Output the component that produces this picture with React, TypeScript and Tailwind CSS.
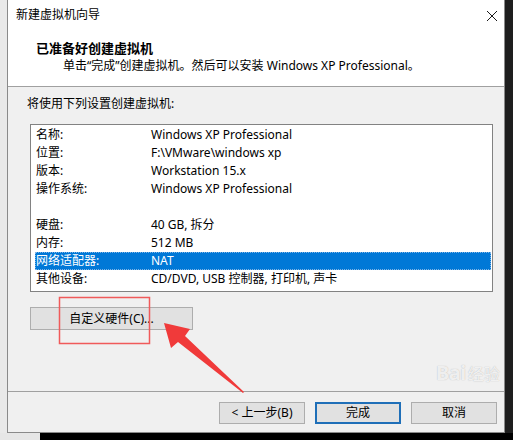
import React from 'react'

const rows: [string, string][] = [
  ['名称:', 'Windows XP Professional'],
  ['位置:', 'F:\\VMware\\windows xp'],
  ['版本:', 'Workstation 15.x'],
  ['操作系统:', 'Windows XP Professional'],
  ['', ''],
  ['硬盘:', '40 GB, 拆分'],
  ['内存:', '512 MB'],
  ['网络适配器:', 'NAT'],
  ['其他设备:', 'CD/DVD, USB 控制器, 打印机, 声卡'],
]

export default function App() {
  return (
    <div
      className="w-[513px] h-[440px] overflow-hidden flex flex-col text-[12px] text-black"
      style={{ fontFamily: '"Noto Sans", "Noto Sans CJK SC", sans-serif' }}
    >
      <div className="flex h-[433px]">
        {/* desktop strip on the left */}
        <div className="w-[7px] bg-[#e9e9e9]" />

        {/* dialog window */}
        <div className="relative w-[498px] flex flex-col border-l border-b border-r border-[#8a8a8a] bg-[#f0f0f0]">
          {/* title + header */}
          <div className="bg-white h-[80px] flex flex-col">
            <div className="h-[30px] flex items-center justify-between pl-[8px] pr-[6px]">
              <span className="leading-[14px]">新建虚拟机向导</span>
              <svg width="12" height="12" viewBox="0 0 12 12" className="mt-[1px]">
                <path d="M1 1 L11 11 M11 1 L1 11" stroke="#1a1a1a" strokeWidth="1" />
              </svg>
            </div>
            <div className="pl-[28px] pt-[9px] text-[13px] font-bold leading-[18px]">已准备好创建虚拟机</div>
            <div className="pl-[55px] mt-[1px] leading-[16px]">
              单击“完成”创建虚拟机。然后可以安装 Windows XP Professional。
            </div>
          </div>
          <div className="h-[7px] bg-white border-b border-[#a0a0a0]" />

          {/* body */}
          <div className="flex-1 flex flex-col px-[22px] pt-[9px]">
            <div className="-ml-[3px] leading-[16px]">将使用下列设置创建虚拟机:</div>
            <div className="mt-[12px] w-[463px] h-[168px] border border-[#828282] bg-white py-[1px] pr-[1px] pl-[4px]">
              {rows.map(([k, v], i) => {
                const sel = k === '网络适配器:'
                return (
                  <div
                    key={i}
                    className={
                      'flex h-[18px] items-center leading-[16px] ' +
                      (sel ? 'bg-[#0078d7] text-white outline outline-1 outline-dotted outline-[#7fb4e6] -outline-offset-1' : '')
                    }
                  >
                    <span className="w-[116px] pl-[1px]">{k}</span>
                    <span>{v}</span>
                  </div>
                )
              })}
            </div>
            <button className="mt-[15px] w-[163px] h-[23px] border border-[#adadad] bg-[#e1e1e1] leading-[16px]">
              自定义硬件(C)...
            </button>
          </div>

          {/* footer */}
          <div className="h-[41px] border-t border-[#a0a0a0] flex items-start justify-end gap-[10px] pt-[10px] pr-[7px]">
            <button className="w-[86px] h-[22px] border border-[#adadad] bg-[#e1e1e1] leading-[16px]">&lt; 上一步(B)</button>
            <button className="w-[86px] h-[22px] border-2 border-[#1f6fb8] bg-[#e1e1e1] leading-[16px]">完成</button>
            <button className="w-[86px] h-[22px] border border-[#adadad] bg-[#e1e1e1] leading-[16px]">取消</button>
          </div>

          {/* annotation: red box and arrow */}
          <svg className="absolute left-0 top-0 pointer-events-none" width="498" height="433" viewBox="8 0 498 433">
            <rect x="59.5" y="297.5" width="90" height="46" fill="none" stroke="#f05a5a" strokeWidth="1.5" />
            <polygon
              points="164,323 190,329 185,336 244,392 243,393 178,342 171,348"
              fill="#f03a3a"
            />
          </svg>

          {/* watermark */}
          <div className="absolute left-[428px] top-[362px] flex items-end gap-[2px] text-white/80 pointer-events-none">
            <span className="text-[20px] font-bold leading-[22px] tracking-tight" style={{ textShadow: '0 0 1px #aaa' }}>
              Bai
            </span>
            <span className="text-[16px] leading-[20px]" style={{ textShadow: '0 0 1px #aaa' }}>
              经验
            </span>
          </div>
        </div>

        {/* dark strip on the right */}
        <div className="flex-1 bg-[#1e1e1e]" />
      </div>
      <div className="flex-1 flex">
        <div className="w-[40px] bg-[#e6e6e6]" />
        <div className="flex-1 bg-black" />
      </div>
    </div>
  )
}
